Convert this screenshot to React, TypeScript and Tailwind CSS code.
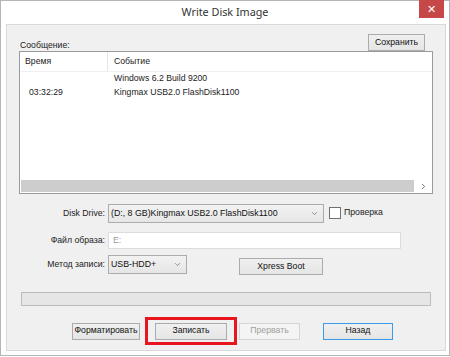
import { ChevronDown, ChevronRight } from 'lucide-react';

const ui = { fontFamily: '"Liberation Sans", Arial, sans-serif' };

function WinButton({
  label,
  width,
  disabled,
  focused,
}: {
  label: string;
  width: string;
  disabled?: boolean;
  focused?: boolean;
}) {
  const look = disabled
    ? 'border-[#d5d5d5] bg-[#f4f4f4] text-[#a0a0a0]'
    : focused
      ? 'border-[#3c9be8] bg-gradient-to-b from-[#f0f0f0] to-[#e5e5e5] text-[#111]'
      : 'border-[#acacac] bg-gradient-to-b from-[#f0f0f0] to-[#e5e5e5] text-[#111]';
  return (
    <div className={`flex h-[17px] items-center justify-center border text-[8.7px] ${look} ${width}`}>
      {label}
    </div>
  );
}

function Combo({ value, width }: { value: string; width: string }) {
  return (
    <div
      className={`flex h-[19px] items-center justify-between overflow-hidden border border-[#acacac] bg-gradient-to-b from-[#f2f2f2] to-[#e6e6e6] pl-[2px] pr-[4px] text-[8.8px] text-[#111] ${width}`}
    >
      <span className="whitespace-nowrap">{value}</span>
      <ChevronDown size={9} strokeWidth={1.6} className="shrink-0 text-[#555]" />
    </div>
  );
}

function FieldRow({ label, children, className }: { label: string; children: React.ReactNode; className: string }) {
  return (
    <div className={`flex items-center ${className}`}>
      <div className="w-[98px] shrink-0 text-right text-[8.7px] text-[#222]">{label}</div>
      <div className="ml-[3px] flex items-start">{children}</div>
    </div>
  );
}

export default function App() {
  return (
    <div className="h-[357px] w-[450px] bg-white" style={ui}>
      <div className="flex h-[356px] w-[450px] flex-col border border-[#b5b5b5] bg-white">
        {/* title bar */}
        <div className="relative flex h-[23px] shrink-0 items-center justify-center">
          <span className="text-[10.8px] text-[#333]" style={{ fontFamily: '"Noto Sans", "Open Sans", sans-serif' }}>
            Write Disk Image
          </span>
          <div className="absolute right-[5px] top-[-1px] flex h-[18px] w-[25px] items-center justify-center bg-[#c74848] text-[11px] text-white">
            ✕
          </div>
        </div>

        {/* client area */}
        <div className="ml-[5px] h-[327px] w-[440px] border border-[#d9d9d9] bg-[#f0f0f0]">
          <div className="flex items-end justify-between pl-[13px] pr-[20px] pt-[9px]">
            <span className="mb-[-1px] text-[8.7px] text-[#222]">Сообщение:</span>
            <WinButton label="Сохранить" width="w-[57px]" />
          </div>

          {/* log list */}
          <div className="ml-[12px] flex h-[143px] w-[414px] flex-col border border-[#9a9a9a] bg-white">
            <div className="flex h-[20px] shrink-0 items-center border-b border-[#f0f0f0] text-[8.7px] text-[#222]">
              <div className="flex h-full w-[88px] items-center border-r border-[#e5e5e5] pl-[5px]">Время</div>
              <div className="pl-[6px]">Событие</div>
            </div>
            <div className="flex h-[14px] items-center text-[8.7px] text-[#222]">
              <div className="w-[88px]" />
              <div className="pl-[6px]">Windows 6.2 Build 9200</div>
            </div>
            <div className="flex h-[14px] items-center text-[8.7px] text-[#222]">
              <div className="w-[88px] pl-[9px]">03:32:29</div>
              <div className="pl-[6px]">Kingmax USB2.0 FlashDisk1100</div>
            </div>
            <div className="flex-1" />
            <div className="flex h-[14px] shrink-0 items-center">
              <div className="ml-[1px] h-[12px] flex-1 bg-[#cdcdcd]" />
              <div className="flex w-[18px] items-center justify-center text-[#555]">
                <ChevronRight size={9} strokeWidth={2.2} />
              </div>
            </div>
          </div>

          <FieldRow label="Disk Drive:" className="mt-[10px]">
            <Combo value="(D:, 8 GB)Kingmax USB2.0 FlashDisk1100" width="w-[216px]" />
            <div className="ml-[5px] mt-[3px] h-[12px] w-[12px] border border-[#707070] bg-white" />
            <span className="ml-[3px] mt-[2px] text-[8.7px] text-[#222]">Проверка</span>
          </FieldRow>

          <FieldRow label="Файл образа:" className="mt-[9px]">
            <div className="flex h-[17px] w-[293px] items-center border border-[#dcdcdc] bg-white pl-[4px] text-[8.7px] text-[#9a9a9a]">
              E:
            </div>
          </FieldRow>

          <FieldRow label="Метод записи:" className="mt-[6px]">
            <Combo value="USB-HDD+" width="w-[79px]" />
            <div className="ml-[52px] mt-[3px]">
              <WinButton label="Xpress Boot" width="w-[84px]" />
            </div>
          </FieldRow>

          {/* progress */}
          <div className="ml-[14px] mt-[17px] h-[14px] w-[410px] border border-[#bcbcbc] bg-[#e6e6e6]" />

          {/* buttons */}
          <div className="ml-[65px] mt-[11px] flex items-center">
            <WinButton label="Форматировать" width="w-[68px]" />
            <div className="ml-[5px] flex h-[28px] w-[92px] items-center justify-center border-[3px] border-[#e8141e]">
              <WinButton label="Записать" width="w-[72px]" />
            </div>
            <div className="ml-[2px]">
              <WinButton label="Прервать" width="w-[61px]" disabled />
            </div>
            <div className="ml-[23px]">
              <WinButton label="Назад" width="w-[70px]" focused />
            </div>
          </div>
        </div>
      </div>
    </div>
  );
}
